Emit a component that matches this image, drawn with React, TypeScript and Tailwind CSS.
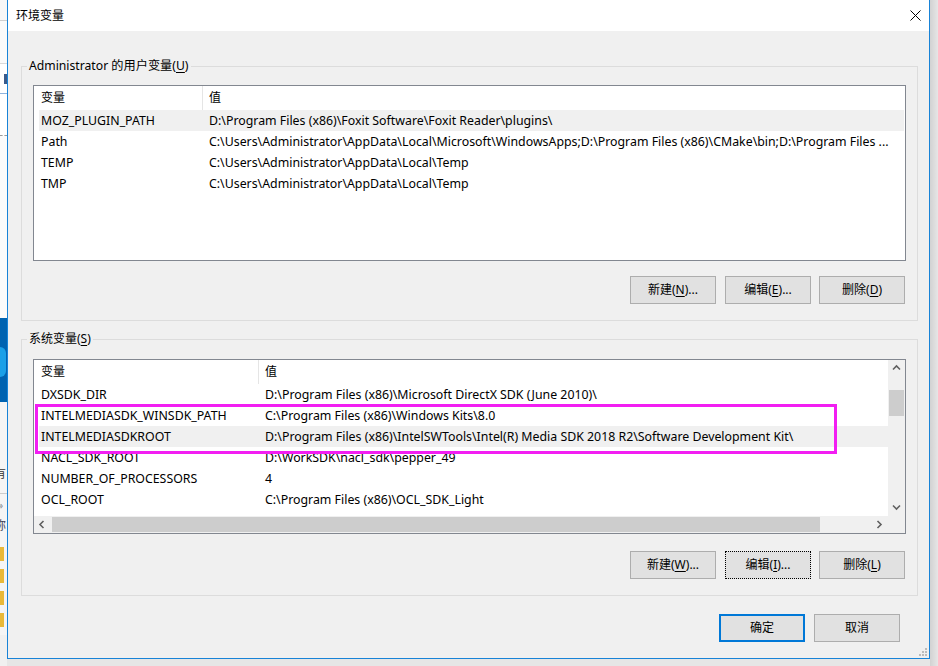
import React from "react";

function Mn({ c }: { c: string }) {
  return <span className="underline underline-offset-[2px] decoration-1">{c}</span>;
}

function Btn({
  pre,
  mn,
  post,
  kind,
  extra,
}: {
  pre: string;
  mn?: string;
  post?: string;
  kind?: "def" | "focus";
  extra?: string;
}) {
  const cls =
    kind === "def"
      ? "border-2 border-[#0078d7]"
      : kind === "focus"
      ? "border border-dotted border-black"
      : "border border-[#adadad]";
  return (
    <div
      className={`w-[86px] h-[28px] shrink-0 bg-[#e1e1e1] flex items-center justify-center text-[12px] text-black whitespace-nowrap ${cls} ${extra ?? ""}`}
    >
      {pre}
      {mn ? (
        <>
          (<Mn c={mn} />)
        </>
      ) : null}
      {post}
    </div>
  );
}

function Chev({ dir }: { dir: "up" | "down" | "left" | "right" }) {
  const pts =
    dir === "up"
      ? "1,5.5 4.5,2 8,5.5"
      : dir === "down"
      ? "1,2.5 4.5,6 8,2.5"
      : dir === "left"
      ? "5.5,1 2,4.5 5.5,8"
      : "2.5,1 6,4.5 2.5,8";
  return (
    <svg width="9" height="9" viewBox="0 0 9 9">
      <polyline points={pts} fill="none" stroke="#606060" strokeWidth="1.6" />
    </svg>
  );
}

const userRows = [
  { n: "MOZ_PLUGIN_PATH", v: "D:\\Program Files (x86)\\Foxit Software\\Foxit Reader\\plugins\\", sel: true },
  {
    n: "Path",
    v: "C:\\Users\\Administrator\\AppData\\Local\\Microsoft\\WindowsApps;D:\\Program Files (x86)\\CMake\\bin;D:\\Program Files ...",
    sel: false,
  },
  { n: "TEMP", v: "C:\\Users\\Administrator\\AppData\\Local\\Temp", sel: false },
  { n: "TMP", v: "C:\\Users\\Administrator\\AppData\\Local\\Temp", sel: false },
];

const sysRows = [
  { n: "DXSDK_DIR", v: "D:\\Program Files (x86)\\Microsoft DirectX SDK (June 2010)\\", sel: false },
  { n: "INTELMEDIASDK_WINSDK_PATH", v: "C:\\Program Files (x86)\\Windows Kits\\8.0", sel: false },
  {
    n: "INTELMEDIASDKROOT",
    v: "D:\\Program Files (x86)\\IntelSWTools\\Intel(R) Media SDK 2018 R2\\Software Development Kit\\",
    sel: true,
  },
  { n: "NACL_SDK_ROOT", v: "D:\\WorkSDK\\nacl_sdk\\pepper_49", sel: false },
  { n: "NUMBER_OF_PROCESSORS", v: "4", sel: false },
  { n: "OCL_ROOT", v: "C:\\Program Files (x86)\\OCL_SDK_Light", sel: false },
];

function UserList() {
  return (
    <div className="h-[176px] shrink-0 border border-[#828790] bg-white flex flex-col overflow-hidden text-[12.35px]">
      <div className="h-[24px] shrink-0 flex text-[12px]">
        <div className="w-[168px] pl-[7px] flex items-center">变量</div>
        <div className="w-px bg-[#e5e5e5]" />
        <div className="flex-1 pl-[6px] flex items-center">值</div>
      </div>
      {userRows.map((r) => (
        <div
          key={r.n}
          className={`h-[21px] shrink-0 ml-[5px] mr-px pt-px flex items-center ${r.sel ? "bg-[#f0f0f0]" : ""}`}
        >
          <div className="w-[164px] shrink-0 pl-[2px] whitespace-nowrap">{r.n}</div>
          <div className="flex-1 pl-[6px] whitespace-nowrap overflow-hidden">{r.v}</div>
        </div>
      ))}
    </div>
  );
}

function SysList() {
  return (
    <div className="relative h-[175px] shrink-0 border border-[#828790] bg-white flex flex-col text-[12.35px]">
      <div className="flex h-[156px] shrink-0">
        <div className="flex-1 flex flex-col overflow-hidden">
          <div className="h-[24px] shrink-0 flex text-[12px]">
            <div className="w-[224px] pl-[7px] flex items-center">变量</div>
            <div className="w-px bg-[#e5e5e5]" />
            <div className="flex-1 pl-[6px] flex items-center">值</div>
          </div>
          {sysRows.map((r) => (
            <div
              key={r.n}
              className={`h-[21px] shrink-0 ml-[5px] pt-px flex items-center ${r.sel ? "bg-[#f0f0f0]" : ""}`}
            >
              <div className="w-[220px] shrink-0 pl-[2px] whitespace-nowrap">{r.n}</div>
              <div className="flex-1 pl-[6px] whitespace-nowrap overflow-hidden">{r.v}</div>
            </div>
          ))}
        </div>
        <div className="w-[17px] shrink-0 bg-[#f0f0f0] flex flex-col">
          <div className="h-[17px] flex items-center justify-center">
            <Chev dir="up" />
          </div>
          <div className="h-[13px]" />
          <div className="h-[26px] mx-px bg-[#cdcdcd]" />
          <div className="flex-1" />
          <div className="h-[17px] flex items-center justify-center">
            <Chev dir="down" />
          </div>
        </div>
      </div>
      <div className="flex h-[17px] shrink-0">
        <div className="flex-1 bg-[#f0f0f0] flex items-center">
          <div className="w-[17px] h-[17px] flex items-center justify-center">
            <Chev dir="left" />
          </div>
          <div className="ml-px w-[768px] h-[15px] bg-[#cdcdcd]" />
          <div className="flex-1" />
          <div className="w-[17px] h-[17px] flex items-center justify-center">
            <Chev dir="right" />
          </div>
        </div>
        <div className="w-[17px] bg-[#f0f0f0]" />
      </div>
      <div className="absolute left-[1px] top-[44px] w-[802px] h-[50px] border-[3px] border-[#f21ef2]" />
    </div>
  );
}

function LeftStrip() {
  return (
    <div className="w-[7px] h-[666px] shrink-0 flex flex-col bg-white overflow-hidden text-[12px]">
      <div className="h-[20px] shrink-0 bg-[#f7f7f7]" />
      <div className="h-px shrink-0 bg-[#cfcfcf]" />
      <div className="h-[42px] shrink-0 bg-[#fafafa]" />
      <div className="h-px shrink-0 bg-[#d9d9d9]" />
      <div className="h-[29px] shrink-0 flex items-center">
        <div className="ml-[4px] w-[3px] h-[10px] bg-[#3b5b8a]" />
      </div>
      <div className="h-px shrink-0 bg-[#8fb3dc]" />
      <div className="h-[41px] shrink-0 bg-white" />
      <div className="h-px shrink-0 border-t border-dashed border-[#9a9a9a]" />
      <div className="h-[182px] shrink-0 bg-[#fbfbfb]" />
      <div className="h-[84px] shrink-0 bg-[#0063b1] flex flex-col">
        <div className="h-[29px]" />
        <div className="h-[30px] w-[6px] rounded-r-full bg-[#1aa0e8]" />
      </div>
      <div className="h-[63px] shrink-0 bg-[#f5f5f5]" />
      <div className="h-[18px] shrink-0 bg-[#f5f5f5] overflow-hidden leading-[18px] whitespace-nowrap">
        <span className="ml-[-6px] text-[#333]">有</span>
      </div>
      <div className="h-[10px] shrink-0 bg-[#f5f5f5]" />
      <div className="h-px shrink-0 bg-[#cccccc]" />
      <div className="h-[22px] shrink-0 bg-[#f5f5f5] overflow-hidden leading-[22px] whitespace-nowrap">
        <span className="ml-[-2px] text-[#888] text-[10px]">»</span>
      </div>
      <div className="h-[20px] shrink-0 bg-[#f5f5f5] overflow-hidden leading-[20px] whitespace-nowrap">
        <span className="ml-[-6px] text-[#445]">称</span>
      </div>
      <div className="h-[11px] shrink-0 bg-[#f5f5f5]" />
      {[0, 1, 2, 3].map((i) => (
        <div key={i} className="h-[22px] shrink-0 bg-[#f5f5f5] flex flex-col">
          <div className="h-[14px] w-[4px] bg-[#e9b938]" />
        </div>
      ))}
      <div className="flex-1 bg-[#f0f0f0]" />
    </div>
  );
}

export default function App() {
  return (
    <div className="w-[938px] h-[666px] flex overflow-hidden bg-[#e8e8e8] font-['Noto_Sans','Noto_Sans_CJK_SC',sans-serif] text-[12px] text-black">
      <LeftStrip />
      <div className="w-[923px] shrink-0 flex flex-col">
        <div className="relative h-[659px] shrink-0 border-x border-b border-[#1883d7] bg-[#f0f0f0] flex flex-col">
          <div className="h-[31px] shrink-0 bg-white flex items-center justify-between pl-[8px] pr-[8px]">
            <span className="text-[12px]">环境变量</span>
            <svg width="11" height="11" viewBox="0 0 11 11">
              <line x1="0.5" y1="0.5" x2="10.5" y2="10.5" stroke="#000" strokeWidth="1" />
              <line x1="10.5" y1="0.5" x2="0.5" y2="10.5" stroke="#000" strokeWidth="1" />
            </svg>
          </div>
          <div className="flex-1 flex flex-col pl-[13px] pr-[11px]">
            <div className="relative mt-[35px] h-[255px] shrink-0 border border-[#dcdcdc] pt-[18px] px-[11px] flex flex-col">
              <div className="absolute left-[5px] top-[-10px] px-[2px] bg-[#f0f0f0] leading-[18px] whitespace-nowrap text-[12.2px]">
                Administrator 的用户变量(<Mn c="U" />)
              </div>
              <UserList />
              <div className="mt-[15px] mr-px flex justify-end gap-[8px]">
                <Btn pre="新建" mn="N" post="..." extra="mr-px" />
                <Btn pre="编辑" mn="E" post="..." />
                <Btn pre="删除" mn="D" />
              </div>
            </div>
            <div className="relative mt-[18px] h-[257px] shrink-0 border border-[#dcdcdc] pt-[19px] px-[11px] flex flex-col">
              <div className="absolute left-[5px] top-[-10px] px-[2px] bg-[#f0f0f0] leading-[18px] whitespace-nowrap">
                系统变量(<Mn c="S" />)
              </div>
              <SysList />
              <div className="mt-[17px] mr-px flex justify-end gap-[8px]">
                <Btn pre="新建" mn="W" post="..." extra="mr-px" />
                <Btn pre="编辑" mn="I" post="..." kind="focus" />
                <Btn pre="删除" mn="L" />
              </div>
            </div>
            <div className="mt-[18px] pr-[18px] flex justify-end gap-[9px]">
              <Btn pre="确定" kind="def" />
              <Btn pre="取消" />
            </div>
          </div>
          <svg className="absolute right-[1px] bottom-[1px]" width="10" height="10" viewBox="0 0 10 10">
            <rect x="7" y="1" width="2" height="2" fill="#bcbcbc" />
            <rect x="4" y="4" width="2" height="2" fill="#bcbcbc" />
            <rect x="7" y="4" width="2" height="2" fill="#bcbcbc" />
            <rect x="1" y="7" width="2" height="2" fill="#bcbcbc" />
            <rect x="4" y="7" width="2" height="2" fill="#bcbcbc" />
            <rect x="7" y="7" width="2" height="2" fill="#bcbcbc" />
          </svg>
        </div>
        <div className="h-[7px] shrink-0 bg-[#e6e6e6]" />
      </div>
      <div className="w-[8px] shrink-0 bg-linear-to-r from-[#d2d2d2] to-[#e6e6e6]" />
    </div>
  );
}
